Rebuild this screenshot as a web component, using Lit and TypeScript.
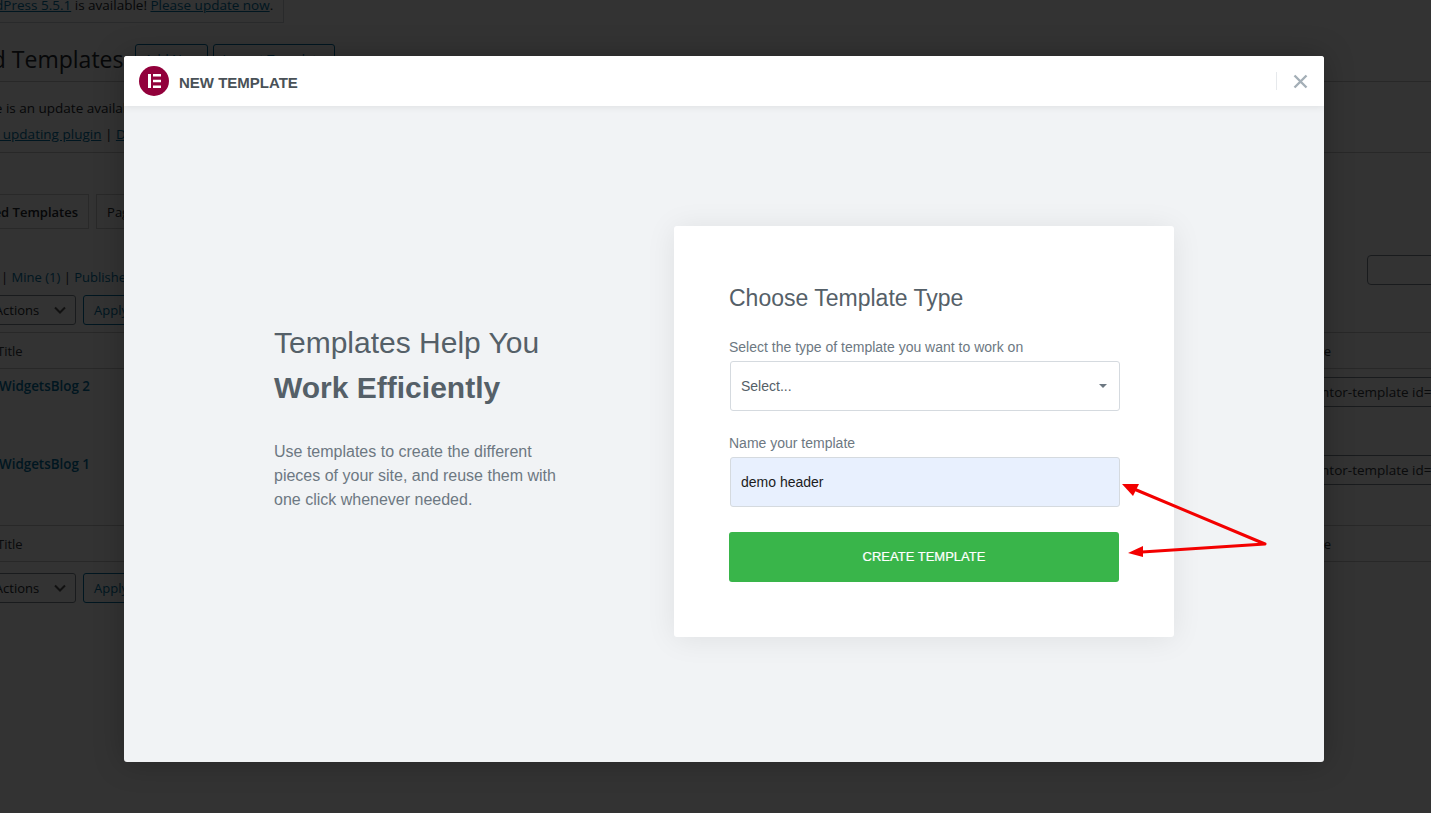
import { LitElement, html, css } from 'lit';
import { customElement } from 'lit/decorators.js';

@customElement('wp-backdrop')
export class WpBackdrop extends LitElement {
  static styles = css`
    :host {
      display: block;
      height: 813px;
      overflow: hidden;
      background: #fdfdfd;
      color: #23282d;
      font-family: 'Open Sans', sans-serif;
      font-size: 13px;
      line-height: 20px;
    }
    a { color: #0071a1; }
    .notice {
      width: 300px;
      height: 23px;
      margin-left: -16px;
      box-sizing: border-box;
      border: 1px solid #ccd0d4;
      border-top: 0;
      white-space: nowrap;
      overflow: hidden;
    }
    .notice p { margin: -5px 0 0 -16px; font-size: 13.5px; }
    .heading {
      display: flex;
      align-items: center;
      gap: 5px;
      height: 36px;
      margin: 18px 0 0 -58px;
    }
    .heading h1 { margin: 0 7px 0 0; font-size: 23px; font-weight: 400; white-space: nowrap; }
    .page-btn {
      height: 30px;
      box-sizing: border-box;
      border: 1px solid #0071a1;
      border-radius: 3px;
      padding: 0 10px;
      color: #0071a1;
      line-height: 28px;
      white-space: nowrap;
    }
    .add { width: 73px; padding: 0 8px; }
    .import { width: 122px; padding: 0 8px; }
    .rule { height: 1px; background: #c8c8c8; margin-top: 4px; }
    .update { margin: 16px 0 0 -34px; white-space: nowrap; font-size: 13.5px; }
    .update.links { margin-top: 6px; margin-left: -36px; }
    .rule.second { margin-top: 8px; }
    .tabs {
      display: flex;
      gap: 7px;
      height: 36px;
      margin: 41px 0 0 -39px;
      box-sizing: border-box;
    }
    .tab {
      height: 35px;
      box-sizing: border-box;
      border: 1px solid #ccc;
      padding: 7px 10px;
      white-space: nowrap;
      font-weight: 600;
    }
    .tab.off { font-weight: 400; width: 200px; }
    .filters {
      display: flex;
      align-items: flex-start;
      justify-content: space-between;
      height: 66px;
      margin-top: -1px;
    }
    .filter-links { margin: 38px 0 0 1px; white-space: nowrap; }
    .search {
      width: 100px;
      height: 28px;
      margin: 26px -38px 0 0;
      border: 1px solid #7e8993;
      border-radius: 4px;
    }
    .bulk {
      display: flex;
      gap: 7px;
      height: 30px;
      margin-left: -60px;
    }
    .bulk-select {
      display: flex;
      align-items: center;
      justify-content: space-between;
      width: 136px;
      height: 30px;
      box-sizing: border-box;
      border: 1px solid #7e8993;
      border-radius: 3px;
      padding: 0 8px 0 24px;
    }
    .bulk-select svg { width: 14px; height: 14px; }
    .apply { width: 70px; }
    .row {
      display: grid;
      grid-template-columns: 1279px 1fr;
      margin-left: -10px;
      white-space: nowrap;
      box-sizing: border-box;
    }
    .row.head {
      height: 37px;
      border-top: 1px solid #c8c8c8;
      border-bottom: 1px solid #c8c8c8;
      padding-top: 8px;
      margin-top: 7px;
      color: #32373c;
    }
    .row.head span:first-child { padding-left: 7px; }
    .row.body { height: 78px; padding-top: 8px; font-weight: 600; color: #0071a1; }
    .row.body .name { padding-left: 9px; font-size: 13.4px; margin-top: -1px; }
    .row.last { height: 71px; }
    .code {
      width: 300px;
      height: 30px;
      box-sizing: border-box;
      border: 1px solid #7e8993;
      padding: 4px 8px;
      font-weight: 400;
      font-size: 13.5px;
      color: #32373c;
    }
    .bulk.lower { margin-top: 11px; }
  `;

  render() {
    const chevron = html`<svg viewBox="0 0 14 14" fill="none" stroke="#555" stroke-width="2"><path d="M2 4.5l5 5 5-5"/></svg>`;
    return html`
      <div class="notice"><p><a href="#">WordPress 5.5.1</a> is available! <a href="#">Please update now</a>.</p></div>
      <div class="heading">
        <h1>Saved Templates</h1>
        <span class="page-btn add">Add New</span>
        <span class="page-btn import">Import Templates</span>
      </div>
      <div class="rule"></div>
      <div class="update">There is an update available</div>
      <div class="update links"><a href="#">Begin updating plugin</a> | <a href="#">Dismiss</a></div>
      <div class="rule second"></div>
      <div class="tabs">
        <span class="tab">Saved Templates</span>
        <span class="tab off">Pages</span>
      </div>
      <div class="filters">
        <div class="filter-links">| <a>Mine (1)</a> | <a>Published (2)</a></div>
        <div class="search"></div>
      </div>
      <div class="bulk">
        <div class="bulk-select">Bulk Actions ${chevron}</div>
        <span class="page-btn apply">Apply</span>
      </div>
      <div class="row head"><span>Title</span><span>Shortcode</span></div>
      <div class="row body">
        <span class="name">WidgetsBlog 2</span>
        <div class="code">[elementor-template id="1482"]</div>
      </div>
      <div class="row body last">
        <span class="name">WidgetsBlog 1</span>
        <div class="code">[elementor-template id="1480"]</div>
      </div>
      <div class="row head foot"><span>Title</span><span>Shortcode</span></div>
      <div class="bulk lower">
        <div class="bulk-select">Bulk Actions ${chevron}</div>
        <span class="page-btn apply">Apply</span>
      </div>
    `;
  }
}

@customElement('new-template-dialog')
export class NewTemplateDialog extends LitElement {
  static styles = css`
    :host {
      display: flex;
      flex-direction: column;
      width: 1200px;
      height: 706px;
      border-radius: 3px;
      overflow: hidden;
      background: #f1f3f5;
      font-family: 'Liberation Sans', Arial, sans-serif;
      box-shadow: 0 0 30px rgba(0, 0, 0, 0.25);
    }
    header {
      display: flex;
      align-items: center;
      flex: none;
      height: 50px;
      padding-left: 15px;
      background: #fff;
      box-shadow: 0 0 8px rgba(0, 0, 0, 0.1);
      position: relative;
    }
    .logo { width: 30px; height: 30px; margin-right: 10px; }
    .title { font-size: 15px; font-weight: 700; color: #495157; padding-top: 2px; }
    .close {
      display: flex;
      align-items: center;
      justify-content: center;
      margin-left: auto;
      width: 47px;
      height: 18px;
      border-left: 1px solid #e6e9ec;
      box-sizing: border-box;
      margin-right: 1px;
    }
    .close svg { width: 15px; height: 15px; }
    .content {
      display: flex;
      align-items: flex-start;
      padding: 120px 0 0 150px;
    }
    .intro { width: 400px; flex: none; padding-top: 94px; box-sizing: border-box; color: #556068; }
    h2 { margin: 0; font-size: 30px; line-height: 45px; font-weight: 400; }
    h2 b { font-weight: 700; }
    .intro p { margin: 30px 0 0; width: 300px; font-size: 16px; line-height: 24px; color: #6d7882; }
    .card {
      width: 500px;
      height: 411px;
      box-sizing: border-box;
      padding: 55px;
      border-radius: 3px;
      background: #fff;
      box-shadow: 0 2px 30px rgba(0, 0, 0, 0.08);
    }
    h3 { margin: 0; font-size: 23px; line-height: 34px; font-weight: 400; color: #556068; }
    label { display: block; font-size: 14px; line-height: 20px; color: #6d7882; }
    .type-label { margin-top: 22px; }
    .name-label { margin-top: 22px; }
    .field {
      display: flex;
      align-items: center;
      justify-content: space-between;
      width: 390px;
      height: 50px;
      margin: 4px 0 0 1px;
      padding: 0 12px 0 10px;
      box-sizing: border-box;
      border: 1px solid #d5dadf;
      border-radius: 3px;
      font-size: 14px;
      color: #556068;
    }
    .field.filled { background: #e8f0fe; color: #1c1c1c; }
    .caret { border: 4px solid transparent; border-top-color: #6d7882; border-bottom: 0; }
    .create {
      display: flex;
      align-items: center;
      justify-content: center;
      width: 390px;
      height: 50px;
      box-sizing: border-box;
      padding-bottom: 2px;
      margin-top: 25px;
      border-radius: 3px;
      background: #39b54a;
      color: #fff;
      font-size: 13px;
      font-weight: 400;
      text-transform: uppercase;
      -webkit-text-stroke: 0.2px #fff;
    }
  `;

  render() {
    return html`
      <header>
        <svg class="logo" viewBox="0 0 30 30">
          <circle cx="15" cy="15" r="15" fill="#92003b"/>
          <path fill="#fff" d="M9 8h3v14H9zM14 8h8v2.6h-8zM14 13.7h8v2.6h-8zM14 19.4h8V22h-8z"/>
        </svg>
        <span class="title">NEW TEMPLATE</span>
        <div class="close">
          <svg viewBox="0 0 15 15" fill="none" stroke="#a4afb7" stroke-width="2.4"><path d="M1.5 1.5l12 12M13.5 1.5l-12 12"/></svg>
        </div>
      </header>
      <div class="content">
        <div class="intro">
          <h2>Templates Help You <br><b>Work Efficiently</b></h2>
          <p>Use templates to create the different pieces of your site, and reuse them with one click whenever needed.</p>
        </div>
        <div class="card">
          <h3>Choose Template Type</h3>
          <label class="type-label">Select the type of template you want to work on</label>
          <div class="field">Select...<span class="caret"></span></div>
          <label class="name-label">Name your template</label>
          <div class="field filled">demo header</div>
          <div class="create">Create Template</div>
        </div>
      </div>
    `;
  }
}

@customElement('app-root')
export class AppRoot extends LitElement {
  static styles = css`
    :host {
      display: block;
      position: relative;
      width: 1431px;
      height: 813px;
      overflow: hidden;
    }
    .scrim { position: absolute; inset: 0; background: rgba(0, 0, 0, 0.8); }
    new-template-dialog { position: absolute; left: 124px; top: 56px; }
    .arrows { position: absolute; inset: 0; width: 1431px; height: 813px; pointer-events: none; }
  `;

  render() {
    return html`
      <wp-backdrop></wp-backdrop>
      <div class="scrim"></div>
      <new-template-dialog></new-template-dialog>
      <svg class="arrows" viewBox="0 0 1431 813">
        <path d="M1265 544L1134 489M1265 544L1142 552" fill="none" stroke="#f30000" stroke-width="3" stroke-linecap="round"/>
        <path d="M1122 484L1139 484L1133 496Z" fill="#f30000"/>
        <path d="M1128 553L1143 546L1143 557Z" fill="#f30000"/>
      </svg>
    `;
  }
}
